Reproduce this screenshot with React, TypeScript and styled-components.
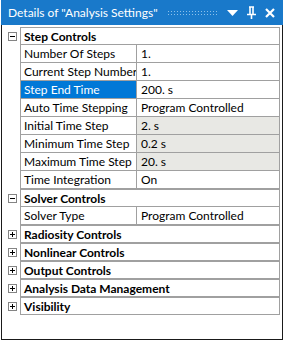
import styled, { createGlobalStyle } from 'styled-components';

const GlobalStyle = createGlobalStyle`
  html, body {
    margin: 0;
    padding: 0;
    background: #ffffff;
  }
  body {
    font-family: Lato, "Noto Sans", sans-serif;
  }
`;

type Prop = {
  name: string;
  value: string;
  selected?: boolean;
  readonly?: boolean;
};

type Group = {
  title: string;
  open: boolean;
  props: Prop[];
};

const GROUPS: Group[] = [
  {
    title: 'Step Controls',
    open: true,
    props: [
      { name: 'Number Of Steps', value: '1.' },
      { name: 'Current Step Number', value: '1.' },
      { name: 'Step End Time', value: '200. s', selected: true },
      { name: 'Auto Time Stepping', value: 'Program Controlled' },
      { name: 'Initial Time Step', value: '2. s', readonly: true },
      { name: 'Minimum Time Step', value: '0.2 s', readonly: true },
      { name: 'Maximum Time Step', value: '20. s', readonly: true },
      { name: 'Time Integration', value: 'On' },
    ],
  },
  {
    title: 'Solver Controls',
    open: true,
    props: [{ name: 'Solver Type', value: 'Program Controlled' }],
  },
  { title: 'Radiosity Controls', open: false, props: [] },
  { title: 'Nonlinear Controls', open: false, props: [] },
  { title: 'Output Controls', open: false, props: [] },
  { title: 'Analysis Data Management', open: false, props: [] },
  { title: 'Visibility', open: false, props: [] },
];

const Expander = ({ open }: { open: boolean }) => (
  <ExpanderBox>
    <svg width="9" height="9" viewBox="0 0 9 9">
      <rect x="0.5" y="0.5" width="8" height="8" fill="#fff" stroke="#848484" />
      <line x1="2" y1="4.5" x2="7" y2="4.5" stroke="#000" />
      {!open && <line x1="4.5" y1="2" x2="4.5" y2="7" stroke="#000" />}
    </svg>
  </ExpanderBox>
);

const App = () => {
  return (
    <>
      <GlobalStyle />
      <Window>
        <TitleBar>
          <Title>Details of "Analysis Settings"</Title>
          <Grip />
          <TitleButton>
            <svg width="11" height="6" viewBox="0 0 11 6">
              <path d="M0 0 H11 L5.5 6 Z" fill="#fff" />
            </svg>
          </TitleButton>
          <TitleButton>
            <svg width="9" height="13" viewBox="0 0 9 13">
              <path d="M2 1 H7 M3 1 V8 M6 1 V8 M0 8.5 H9 M4.5 9 V13" stroke="#fff" strokeWidth="1.6" fill="none" />
            </svg>
          </TitleButton>
          <TitleButton>
            <svg width="10" height="10" viewBox="0 0 10 10">
              <path d="M1 1 L9 9 M9 1 L1 9" stroke="#fff" strokeWidth="2.2" />
            </svg>
          </TitleButton>
        </TitleBar>
        <Body>
          <Grid>
            {GROUPS.map((g) => (
              <GroupBlock key={g.title}>
                <Expander open={g.open} />
                <GroupHeader>{g.title}</GroupHeader>
                {g.open &&
                  g.props.map((p) => (
                    <PropRow key={p.name}>
                      <Gutter />
                      <NameCell $selected={p.selected}>{p.name}</NameCell>
                      <ValueCell $readonly={p.readonly}>{p.value}</ValueCell>
                    </PropRow>
                  ))}
              </GroupBlock>
            ))}
          </Grid>
        </Body>
      </Window>
    </>
  );
};

const Window = styled.div`
  margin-left: 1px;
  width: 282px;
  height: 340px;
  box-sizing: border-box;
  display: flex;
  flex-direction: column;
  background: #fff;
  border: 1px solid #1a1a1a;
  border-top: none;
`;

const TitleBar = styled.div`
  display: flex;
  align-items: center;
  height: 25px;
  margin: 0 -1px;
  padding: 0 7px 0 7px;
  background: #1979ca;
  color: #fff;
  gap: 7px;
`;

const Title = styled.span`
  font-size: 12px;
  white-space: nowrap;
`;

const Grip = styled.div`
  flex: 1;
  height: 5px;
  margin: 0 0 0 2px;
  background-image: radial-gradient(circle, #8cc0ea 0.7px, transparent 0.8px);
  background-size: 3px 3px;
  background-position: 0 0;
`;

const TitleButton = styled.span`
  display: inline-flex;
  align-items: center;
  justify-content: center;
  width: 12px;
`;

const Body = styled.div`
  flex: 1;
  padding: 2px 2px 0 2px;
`;

const Grid = styled.div`
  display: grid;
  grid-template-columns: 16px 116px 1fr;
  font-size: 12px;
  color: #000;
`;

const GroupBlock = styled.div`
  display: contents;
`;

const PropRow = styled.div`
  display: contents;
`;

const ExpanderBox = styled.div`
  height: 18px;
  display: flex;
  align-items: center;
  justify-content: center;
  padding-left: 1px;
`;

const GroupHeader = styled.div`
  grid-column: 2 / 4;
  height: 18px;
  box-sizing: border-box;
  border-left: 1px solid #a0a0a0;
  border-right: 1px solid #a0a0a0;
  border-bottom: 1px solid #a0a0a0;
  &:nth-child(2) {
    border-top: 1px solid #a0a0a0;
  }
  padding-left: 3px;
  font-weight: bold;
  line-height: 17px;
  white-space: nowrap;
`;

const Gutter = styled.div`
  height: 18px;
`;

const NameCell = styled.div<{ $selected?: boolean }>`
  height: 18px;
  box-sizing: border-box;
  border-left: 1px solid #a0a0a0;
  border-bottom: 1px solid #a0a0a0;
  padding-left: 3px;
  line-height: 17px;
  white-space: nowrap;
  overflow: hidden;
  background: ${(p) => (p.$selected ? '#0078d7' : '#fff')};
  color: ${(p) => (p.$selected ? '#fff' : '#000')};
`;

const ValueCell = styled.div<{ $readonly?: boolean }>`
  height: 18px;
  box-sizing: border-box;
  border-left: 1px solid #a0a0a0;
  border-right: 1px solid #a0a0a0;
  border-bottom: 1px solid #a0a0a0;
  padding-left: 4px;
  line-height: 17px;
  white-space: nowrap;
  overflow: hidden;
  background: ${(p) => (p.$readonly ? '#e8e8e4' : '#fff')};
`;

export default App;
